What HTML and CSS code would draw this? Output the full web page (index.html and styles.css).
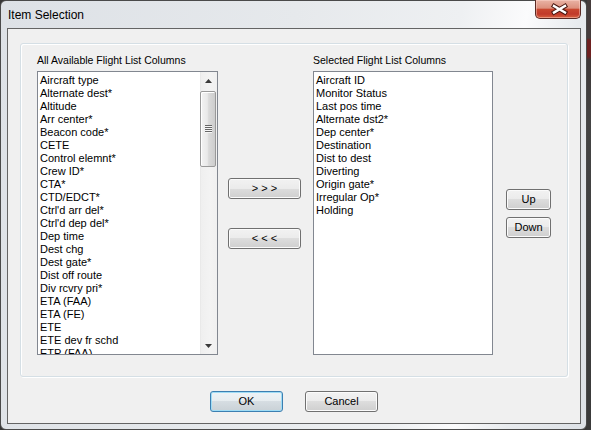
FILE: index.html
```html
<!DOCTYPE html>
<html>
<head>
<meta charset="utf-8">
<title>Item Selection</title>
<link rel="stylesheet" href="styles.css">
</head>
<body>
<div class="desktop">
  <div class="window">
    <div class="titlebar">
      <span class="title">Item Selection</span>
      <div class="close">
        <svg width="46" height="19" viewBox="0 0 46 19">
          <path d="M19 6 L30 12.5 M30 6 L19 12.5" stroke="#4a1710" stroke-width="4.4" stroke-linecap="square" fill="none"/>
          <path d="M19 6 L30 12.5 M30 6 L19 12.5" stroke="#ffffff" stroke-width="2.4" stroke-linecap="square" fill="none"/>
        </svg>
      </div>
    </div>
    <div class="client">
      <div class="group">
        <div class="col col-left">
          <div class="label">All Available Flight List Columns</div>
          <div class="listbox">
            <ul class="items">
              <li>Aircraft type</li>
              <li>Alternate dest*</li>
              <li>Altitude</li>
              <li>Arr center*</li>
              <li>Beacon code*</li>
              <li>CETE</li>
              <li>Control elemnt*</li>
              <li>Crew ID*</li>
              <li>CTA*</li>
              <li>CTD/EDCT*</li>
              <li>Ctrl'd arr del*</li>
              <li>Ctrl'd dep del*</li>
              <li>Dep time</li>
              <li>Dest chg</li>
              <li>Dest gate*</li>
              <li>Dist off route</li>
              <li>Div rcvry pri*</li>
              <li>ETA (FAA)</li>
              <li>ETA (FE)</li>
              <li>ETE</li>
              <li>ETE dev fr schd</li>
              <li>ETP (FAA)</li>
            </ul>
            <div class="scrollbar">
              <div class="sb-btn">
                <svg width="7" height="4" viewBox="0 0 7 4"><polygon points="0,4 3.5,0 7,4" fill="#3a3a3a"/></svg>
              </div>
              <div class="thumb"><div class="grip"></div></div>
              <div class="sb-track"></div>
              <div class="sb-btn">
                <svg width="7" height="4" viewBox="0 0 7 4"><polygon points="0,0 7,0 3.5,4" fill="#3a3a3a"/></svg>
              </div>
            </div>
          </div>
        </div>
        <div class="mid">
          <button class="btn">&gt; &gt; &gt;</button>
          <button class="btn">&lt; &lt; &lt;</button>
        </div>
        <div class="col col-right">
          <div class="label">Selected Flight List Columns</div>
          <div class="listbox">
            <ul class="items">
              <li>Aircraft ID</li>
              <li>Monitor Status</li>
              <li>Last pos time</li>
              <li>Alternate dst2*</li>
              <li>Dep center*</li>
              <li>Destination</li>
              <li>Dist to dest</li>
              <li>Diverting</li>
              <li>Origin gate*</li>
              <li>Irregular Op*</li>
              <li>Holding</li>
            </ul>
          </div>
        </div>
        <div class="updown">
          <button class="btn btn-small">Up</button>
          <button class="btn btn-small">Down</button>
        </div>
      </div>
      <div class="footer">
        <button class="btn btn-default">OK</button>
        <button class="btn">Cancel</button>
      </div>
    </div>
  </div>
  <div class="edge"></div>
</div>
</body>
</html>
```
FILE: styles.css
```css
html, body {
  margin: 0;
  padding: 0;
}
body {
  width: 591px;
  height: 430px;
  overflow: hidden;
  background: #383838;
  font-family: "Liberation Sans", Arial, sans-serif;
  color: #000;
}
.desktop {
  display: flex;
  width: 591px;
  height: 430px;
  background: #383838;
}
.edge {
  flex: 1;
  background: linear-gradient(#453c3c 0, #453c3c 38px, #6e2020 40px, #6e2020 56px, #3d3737 60px, #444 120px, #3a3a3a 100%);
}
.window {
  width: 587px;
  height: 430px;
  box-sizing: border-box;
  border: 1px solid #4a4a4a;
  border-radius: 6px;
  background: linear-gradient(100deg, #dde1e6 0%, #e6e9ec 45%, #eef0f2 70%, #fbfbfc 80%, #e8ebee 88%, #dde1e6 100%);
  display: flex;
  flex-direction: column;
}
.titlebar {
  height: 27px;
  display: flex;
  align-items: center;
  padding-left: 7px;
}
.title {
  font-size: 12px;
  line-height: 14px;
  color: #000;
}
.close {
  margin-left: auto;
  margin-right: 5px;
  align-self: flex-start;
  margin-top: -1px;
  width: 46px;
  height: 19px;
  box-sizing: border-box;
  border: 1px solid #5a2a24;
  border-top: none;
  border-radius: 0 0 5px 5px;
  background: linear-gradient(#e9b3a5 0%, #dc907d 45%, #c8472f 52%, #c13a2a 78%, #d8623f 100%);
  box-shadow: inset 0 0 0 1px rgba(255, 220, 210, 0.45);
  display: flex;
  align-items: center;
  justify-content: center;
  overflow: hidden;
}
.close svg {
  display: block;
  flex: none;
}
.client {
  margin-left: 6px;
  width: 574px;
  height: 396px;
  box-sizing: border-box;
  border: 1px solid #646464;
  background: #f0f0f0;
  display: flex;
  flex-direction: column;
  align-items: flex-start;
}
.group {
  margin: 14px 0 0 12px;
  width: 548px;
  height: 334px;
  box-sizing: border-box;
  border: 1px solid #d5dfe5;
  border-radius: 3px;
  box-shadow: inset 1px 1px 0 #fff, 1px 1px 0 #fff;
  display: flex;
  align-items: flex-start;
  padding-left: 16px;
}
.col {
  display: flex;
  flex-direction: column;
  padding-top: 10px;
}
.label {
  font-size: 10.5px;
  line-height: 13px;
  height: 13px;
  white-space: nowrap;
}
.listbox {
  margin-top: 4px;
  height: 284px;
  box-sizing: border-box;
  border: 1px solid #828790;
  background: #fff;
  display: flex;
  overflow: hidden;
}
.col-left .listbox {
  width: 181px;
}
.col-right .listbox {
  width: 180px;
}
.items {
  list-style: none;
  margin: 0;
  padding: 2px 0 0 2px;
  flex: 1;
  font-size: 11px;
  line-height: 13px;
  white-space: nowrap;
  overflow: hidden;
}
.scrollbar {
  width: 17px;
  flex: none;
  display: flex;
  flex-direction: column;
  background: linear-gradient(90deg, #e3e3e3 0, #efefef 1px, #f3f3f3 60%, #f0f0f0 100%);
}
.sb-btn {
  height: 17px;
  flex: none;
  display: flex;
  align-items: center;
  justify-content: center;
}
.sb-btn svg {
  display: block;
}
.thumb {
  margin-top: 2px;
  width: 16px;
  height: 76px;
  box-sizing: border-box;
  border: 1px solid #999;
  border-radius: 2px;
  background: linear-gradient(90deg, #f3f3f3 0%, #e9e9e9 45%, #dadada 55%, #cdcdcd 100%);
  box-shadow: inset 1px 1px 0 #fff;
  display: flex;
  align-items: center;
  justify-content: center;
  flex: none;
}
.grip {
  width: 7px;
  height: 8px;
  background: repeating-linear-gradient(to bottom, #666 0 1px, #f6f6f6 1px 2px);
}
.sb-track {
  flex: 1;
}
.mid {
  display: flex;
  flex-direction: column;
  margin-left: 10px;
  padding-top: 134px;
  gap: 29px;
}
.col-right {
  margin-left: 12px;
}
.updown {
  display: flex;
  flex-direction: column;
  margin-left: 13px;
  padding-top: 145px;
  gap: 7px;
}
.btn {
  width: 73px;
  height: 21px;
  box-sizing: border-box;
  border: 1px solid #707070;
  border-radius: 3px;
  background: linear-gradient(#f2f2f2 0%, #ebebeb 50%, #dddddd 50%, #cfcfcf 100%);
  box-shadow: inset 0 0 0 1px #fbfbfb;
  font-family: "Liberation Sans", Arial, sans-serif;
  font-size: 11px;
  line-height: 13px;
  color: #000;
  padding: 0;
  margin: 0;
  text-align: center;
}
.btn-small {
  width: 45px;
}
.btn-default {
  border-color: #3c7fb1;
  box-shadow: inset 0 0 0 1px #9fdcf5;
  background: linear-gradient(#eef3f6 0%, #e6ecef 50%, #d6dde2 50%, #c9d1d6 100%);
}
.footer {
  align-self: stretch;
  display: flex;
  justify-content: center;
  gap: 22px;
  margin-top: 14px;
}
```
